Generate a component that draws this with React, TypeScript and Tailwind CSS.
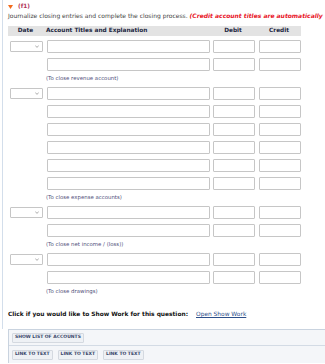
import React from "react";

type Entry = { rows: number; note: string };

const entries: Entry[] = [
  { rows: 2, note: "(To close revenue account)" },
  { rows: 6, note: "(To close expense accounts)" },
  { rows: 2, note: "(To close net income / (loss))" },
  { rows: 2, note: "(To close drawings)" },
];

function DateSelect() {
  return (
    <div className="w-[33px] h-[11px] border border-[#c6c6c6] rounded-[1px] bg-white flex items-center justify-end pr-[3px]">
      <svg width="4" height="3" viewBox="0 0 4 3">
        <path d="M0.3 0.5 L2 2.4 L3.7 0.5" fill="none" stroke="#777" strokeWidth="0.6" />
      </svg>
    </div>
  );
}

function Box({ w }: { w: string }) {
  return <div className={`${w} h-[13px] border border-[#c6c6c6] rounded-[1px] bg-white`} />;
}

function Row({ first }: { first: boolean }) {
  return (
    <div className="flex items-center h-[13px] pl-[2px]">
      <div className="w-[33px] flex">{first && <DateSelect />}</div>
      <div className="ml-[4px]">
        <Box w="w-[163px]" />
      </div>
      <div className="ml-[3px]">
        <Box w="w-[42px]" />
      </div>
      <div className="ml-[4px]">
        <Box w="w-[42px]" />
      </div>
    </div>
  );
}

function Btn({ label }: { label: string }) {
  return (
    <div className="h-[10px] px-[2px] border border-[#d4d9e0] bg-[#eef1f5] rounded-[1px] flex items-center text-[4.5px] font-bold text-[#39476a] leading-none">
      {label}
    </div>
  );
}

export default function App() {
  return (
    <div className="w-[325px] h-[364px] overflow-hidden bg-white" style={{ fontFamily: '"DejaVu Sans", Verdana, sans-serif' }}>
      <div className="ml-[2px] border-l border-[#d3deeb] pl-[5px] h-[329px] overflow-hidden">
        {/* question heading */}
        <div className="flex items-center h-[12px] pt-[1px]">
          <svg width="5" height="4" viewBox="0 0 5 4" className="mt-[1px]">
            <path d="M0 0 H5 L2.5 4 Z" fill="#f26b1d" />
          </svg>
          <span className="ml-[5px] text-[5.8px] font-bold text-[#b2345a] leading-none">(f1)</span>
        </div>
        <div className="whitespace-nowrap text-[6px] text-[#444] leading-none mt-[1px]">
          Journalize closing entries and complete the closing process.{" "}
          <span className="font-bold italic text-[#e8141f]">(Credit account titles are automatically</span>
        </div>

        {/* table header */}
        <div className="mt-[7px] w-[293px] h-[10px] bg-[#e3e3e3] flex items-center text-[5.8px] font-bold text-[#1c2640] leading-none">
          <span className="w-[35px] text-center">Date</span>
          <span className="ml-[3px] w-[166px]">Account Titles and Explanation</span>
          <span className="w-[42px] text-center">Debit</span>
          <span className="ml-[4px] w-[42px] text-center">Credit</span>
        </div>

        {/* entries */}
        <div className="mt-[4px]">
          {entries.map((e, i) => (
            <div key={i} className="mb-[4px]">
              <div className="flex flex-col gap-[5px]">
                {Array.from({ length: e.rows }).map((_, r) => (
                  <Row key={r} first={r === 0} />
                ))}
              </div>
              <div className="mt-[3px] h-[9px] flex items-center pl-[38px] text-[5.4px] text-[#50507a] leading-none whitespace-nowrap">
                {e.note}
              </div>
            </div>
          ))}
        </div>

        <div className="mt-[16px] flex items-center text-[5.9px] leading-none whitespace-nowrap">
          <span className="font-bold text-[#111]">Click if you would like to Show Work for this question:</span>
          <span className="ml-[8px] text-[#2d4f8a] underline">Open Show Work</span>
        </div>
      </div>

      {/* bottom tools panel */}
      <div className="ml-[8px] border-t border-l border-[#c9d3df] bg-[#f4f6f9]">
        <div className="h-[16px] flex items-center pl-[3px] border-b border-[#d3dbe5]">
          <Btn label="SHOW LIST OF ACCOUNTS" />
        </div>
        <div className="h-[17px] flex items-center gap-[5px] pl-[3px]">
          <Btn label="LINK TO TEXT" />
          <Btn label="LINK TO TEXT" />
          <Btn label="LINK TO TEXT" />
        </div>
      </div>
    </div>
  );
}
